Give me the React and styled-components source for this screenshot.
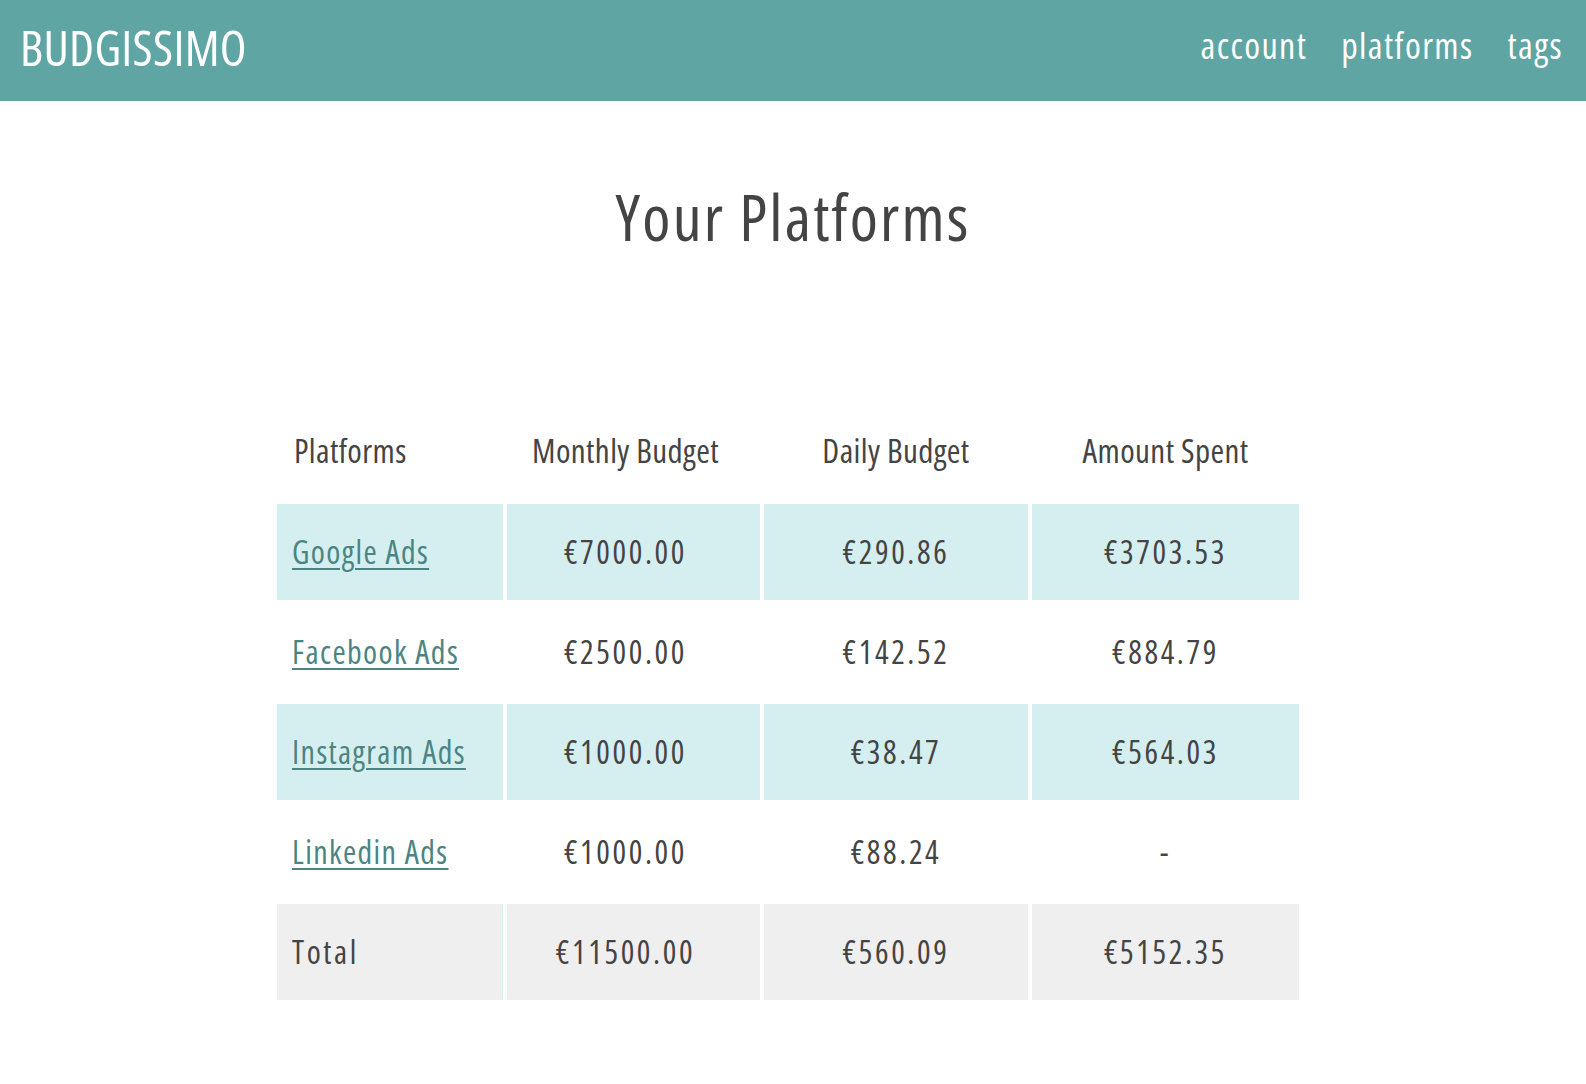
import styled, { createGlobalStyle } from "styled-components";

const GlobalStyle = createGlobalStyle`
  body {
    margin: 0;
    background: #fff;
    font-family: "Open Sans", "DejaVu Sans Condensed", sans-serif;
    font-stretch: 75%;
    font-weight: 400;
    color: #444;
  }
`;

const TopBar = styled.header`
  height: 101px;
  background: #5ea5a3;
  display: flex;
  align-items: center;
  justify-content: space-between;
  padding: 0 23px 0 20px;
  box-sizing: border-box;
`;

const Logo = styled.div`
  color: #fff;
  font-size: 49px;
  letter-spacing: 0.3px;
  padding-bottom: 8px;
`;

const Nav = styled.nav`
  display: flex;
  gap: 34px;
  padding-bottom: 10px;

  a {
    color: #fff;
    font-size: 36px;
    letter-spacing: 1.4px;
    text-decoration: none;
  }
`;

const Main = styled.main`
  padding-top: 78px;
`;

const Title = styled.h1`
  margin: 0;
  text-align: center;
  font-size: 64px;
  font-weight: 400;
  letter-spacing: 2.2px;
  line-height: 1.2;
  color: #444;
`;

const Table = styled.table`
  margin: 148px 0 0 273px;
  border-collapse: separate;
  border-spacing: 4px;
  table-layout: fixed;
  width: 1030px;
  font-size: 32px;
  letter-spacing: 2.6px;
`;

const Th = styled.th`
  height: 92px;
  font-size: 33px;
  font-weight: 400;
  letter-spacing: 0.4px;
  text-align: ${(p) => (p.$left ? "left" : "center")};
  padding: 0 ${(p) => (p.$shift ? "16px" : "0")} 6px ${(p) => (p.$left ? "17px" : "0")};
  box-sizing: border-box;
  color: #444;
`;

const Row = styled.tr`
  background: ${(p) => (p.$tone === "cyan" ? "#d5eff0" : p.$tone === "gray" ? "#efefef" : "transparent")};
`;

const Td = styled.td`
  height: 96px;
  padding: 0 ${(p) => (p.$shift ? "16px" : "0")} 0 ${(p) => (p.$left ? "15px" : "0")};
  text-align: ${(p) => (p.$left ? "left" : "center")};
  box-sizing: border-box;
  border-right: ${(p) => (p.$edge ? "1px solid #d5eff0" : "none")};
  white-space: nowrap;
`;

const PlatformLink = styled.a`
  color: #4b8583;
  letter-spacing: 1.4px;
  text-decoration: underline;
  text-decoration-thickness: 2px;
  text-underline-offset: 4px;
`;

const rows = [
  { name: "Google Ads", monthly: "€7000.00", daily: "€290.86", spent: "€3703.53" },
  { name: "Facebook Ads", monthly: "€2500.00", daily: "€142.52", spent: "€884.79" },
  { name: "Instagram Ads", monthly: "€1000.00", daily: "€38.47", spent: "€564.03" },
  { name: "Linkedin Ads", monthly: "€1000.00", daily: "€88.24", spent: "-" },
];

const colWidths = [226, 253, 264, 267];

export default function App() {
  return (
    <>
      <GlobalStyle />
      <TopBar>
        <Logo>BUDGISSIMO</Logo>
        <Nav>
          <a href="#">account</a>
          <a href="#">platforms</a>
          <a href="#">tags</a>
        </Nav>
      </TopBar>
      <Main>
        <Title>Your Platforms</Title>
        <Table>
          <colgroup>
            {colWidths.map((w) => (
              <col key={w} style={{ width: w }} />
            ))}
          </colgroup>
          <thead>
            <tr>
              <Th $left>Platforms</Th>
              <Th $shift>Monthly Budget</Th>
              <Th>Daily Budget</Th>
              <Th>Amount Spent</Th>
            </tr>
          </thead>
          <tbody>
            {rows.map((r, i) => (
              <Row key={r.name} $tone={i % 2 === 0 ? "cyan" : "none"}>
                <Td $left>
                  <PlatformLink href="#">{r.name}</PlatformLink>
                </Td>
                <Td $shift>{r.monthly}</Td>
                <Td>{r.daily}</Td>
                <Td>{r.spent}</Td>
              </Row>
            ))}
            <Row $tone="gray">
              <Td $left $edge>Total</Td>
              <Td $shift>€11500.00</Td>
              <Td>€560.09</Td>
              <Td>€5152.35</Td>
            </Row>
          </tbody>
        </Table>
      </Main>
    </>
  );
}
